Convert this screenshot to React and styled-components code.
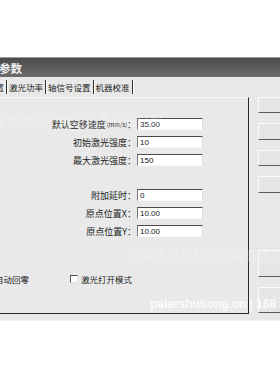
import React from 'react';
import styled, { createGlobalStyle } from 'styled-components';

const GlobalStyle = createGlobalStyle`
  html, body {
    margin: 0;
    padding: 0;
    background: #ffffff;
    overflow: hidden;
  }
  body {
    font-family: "Noto Sans CJK SC", "Liberation Sans", sans-serif;
  }
`;

const tabs = ['常规设置', '激光功率', '轴信号设置', '机器校准'];

const firstGroup = [
  { label: '默认空移速度', unit: '(mm/s)', value: '35.00' },
  { label: '初始激光强度', value: '10' },
  { label: '最大激光强度', value: '150' },
];

const secondGroup = [
  { label: '附加延时', value: '0' },
  { label: '原点位置X', value: '10.00' },
  { label: '原点位置Y', value: '10.00' },
];

function App() {
  return (
    <>
      <GlobalStyle />
      <Page>
        <Window>
          <TitleBar>系统参数</TitleBar>
          <Body>
            <LeftPanel>
              <TabList>
                {tabs.map((t, i) => (
                  <Tab key={t} $active={i === 0}>{t}</Tab>
                ))}
              </TabList>
              <TabPage>
                <FieldGroup>
                  {firstGroup.map(f => (
                    <Field key={f.label} {...f} />
                  ))}
                </FieldGroup>
                <FieldGroup>
                  {secondGroup.map(f => (
                    <Field key={f.label} {...f} />
                  ))}
                </FieldGroup>
                <CheckRow>
                  <CheckItem>
                    <CheckBox />
                    自动回零
                  </CheckItem>
                  <CheckItem>
                    <CheckBox />
                    激光打开模式
                  </CheckItem>
                </CheckRow>
              </TabPage>
            </LeftPanel>
            <ButtonColumn>
              <ButtonGroup>
                <SideButton />
                <SideButton $h={17} />
                <SideButton />
                <SideButton $h={17} />
              </ButtonGroup>
              <ButtonGroup>
                <SideButton $h={27} />
                <SideButton $h={26} />
              </ButtonGroup>
            </ButtonColumn>
          </Body>
        </Window>
        <Watermark $top={110} $left={-6} $faint>深圳市派尔数控设备有限公司</Watermark>
        <Watermark $top={245} $left={128} $faint>深圳市派尔数控设备有限公司</Watermark>
        <Watermark $top={297} $left={150}>paiershukong.cn | 168</Watermark>
      </Page>
    </>
  );
}

function Field({ label, unit, value }) {
  return (
    <>
      <Label>
        {label}
        {unit && <Unit>{unit}</Unit>}
        ：
      </Label>
      <Input>{value}</Input>
    </>
  );
}

const Page = styled.div`
  position: relative;
  width: 280px;
  height: 380px;
  padding-top: 57px;
  box-sizing: border-box;
  overflow: hidden;
`;

const Window = styled.div`
  width: 340px;
  margin-left: -60px;
  background: #e8e8e8;
  border-bottom: 1px solid #f4f4f4;
`;

const TitleBar = styled.div`
  height: 20px;
  padding-left: 36px;
  display: flex;
  align-items: center;
  background: linear-gradient(#4c4c4c, #6c6c6c);
  border-top: 1px solid #9a9a9a;
  box-sizing: border-box;
  color: #f0f0f0;
  font-size: 11.5px;
  font-weight: 700;
`;

const Body = styled.div`
  display: flex;
  gap: 9px;
  height: 243px;
`;

const LeftPanel = styled.div`
  width: 309px;
  display: flex;
  flex-direction: column;
`;

const TabList = styled.div`
  height: 20px;
  padding-left: 28px;
  display: flex;
  align-items: center;
`;

const Tab = styled.div`
  height: 14px;
  padding: 0 2px;
  display: flex;
  align-items: center;
  font-size: 8.5px;
  color: #1e1e1e;
  border-right: 1px solid #2c2c2c;
  box-shadow: 1px 0 0 #ffffff;
  white-space: nowrap;
  background: ${p => (p.$active ? '#ededed' : 'transparent')};
`;

const TabPage = styled.div`
  flex: 1;
  display: flex;
  flex-direction: column;
  padding-top: 20px;
  border-top: 1px solid #f6f6f6;
  border-right: 1px solid #2a2a2a;
  border-bottom: 1px solid #2a2a2a;
  margin-bottom: 6px;
  background: #e9e9e9;
`;

const FieldGroup = styled.div`
  display: grid;
  grid-template-columns: 196px 66px;
  column-gap: 1px;
  row-gap: 6px;
  & + & {
    margin-top: 23px;
  }
`;

const Label = styled.div`
  height: 12px;
  display: flex;
  align-items: center;
  justify-content: flex-end;
  font-size: 9px;
  color: #1c1c1c;
  white-space: nowrap;
`;

const Unit = styled.span`
  font-size: 6px;
  margin-left: 1px;
`;

const Input = styled.div`
  height: 12px;
  box-sizing: border-box;
  padding-left: 2px;
  display: flex;
  align-items: center;
  background: #ffffff;
  border-top: 1px solid #4a4a4a;
  border-left: 1px solid #7a7a7a;
  border-right: 1px solid #dcdcdc;
  border-bottom: 1px solid #f8f8f8;
  font-family: "Liberation Sans", sans-serif;
  font-size: 8px;
  color: #111111;
`;

const CheckRow = styled.div`
  display: flex;
  gap: 41px;
  margin-top: 36px;
  padding-left: 44px;
`;

const CheckItem = styled.label`
  display: flex;
  align-items: center;
  gap: 3px;
  font-size: 8.5px;
  color: #1c1c1c;
  white-space: nowrap;
`;

const CheckBox = styled.span`
  width: 8px;
  height: 8px;
  box-sizing: border-box;
  background: #ffffff;
  border-top: 1px solid #555555;
  border-left: 1px solid #555555;
  border-right: 1px solid #e0e0e0;
  border-bottom: 1px solid #e0e0e0;
`;

const ButtonColumn = styled.div`
  flex: 1;
  display: flex;
  flex-direction: column;
  justify-content: space-between;
  padding: 20px 0 7px;
`;

const ButtonGroup = styled.div`
  display: flex;
  flex-direction: column;
  gap: 10px;
`;

const SideButton = styled.div`
  height: ${p => p.$h || 16}px;
  box-sizing: border-box;
  background: #e6e6e6;
  border-top: 1px solid #fbfbfb;
  border-left: 1px solid #fbfbfb;
  border-bottom: 1px solid #5c5c5c;
`;

const Watermark = styled.div`
  position: absolute;
  top: ${p => p.$top}px;
  left: ${p => p.$left}px;
  white-space: nowrap;
  pointer-events: none;
  font-family: ${p => (p.$faint ? '"Noto Sans CJK SC", sans-serif' : '"Liberation Sans", sans-serif')};
  font-size: ${p => (p.$faint ? '13px' : '12px')};
  font-weight: 700;
  color: ${p => (p.$faint ? 'rgba(255,255,255,0.22)' : 'rgba(255,255,255,0.85)')};
`;

export default App;
